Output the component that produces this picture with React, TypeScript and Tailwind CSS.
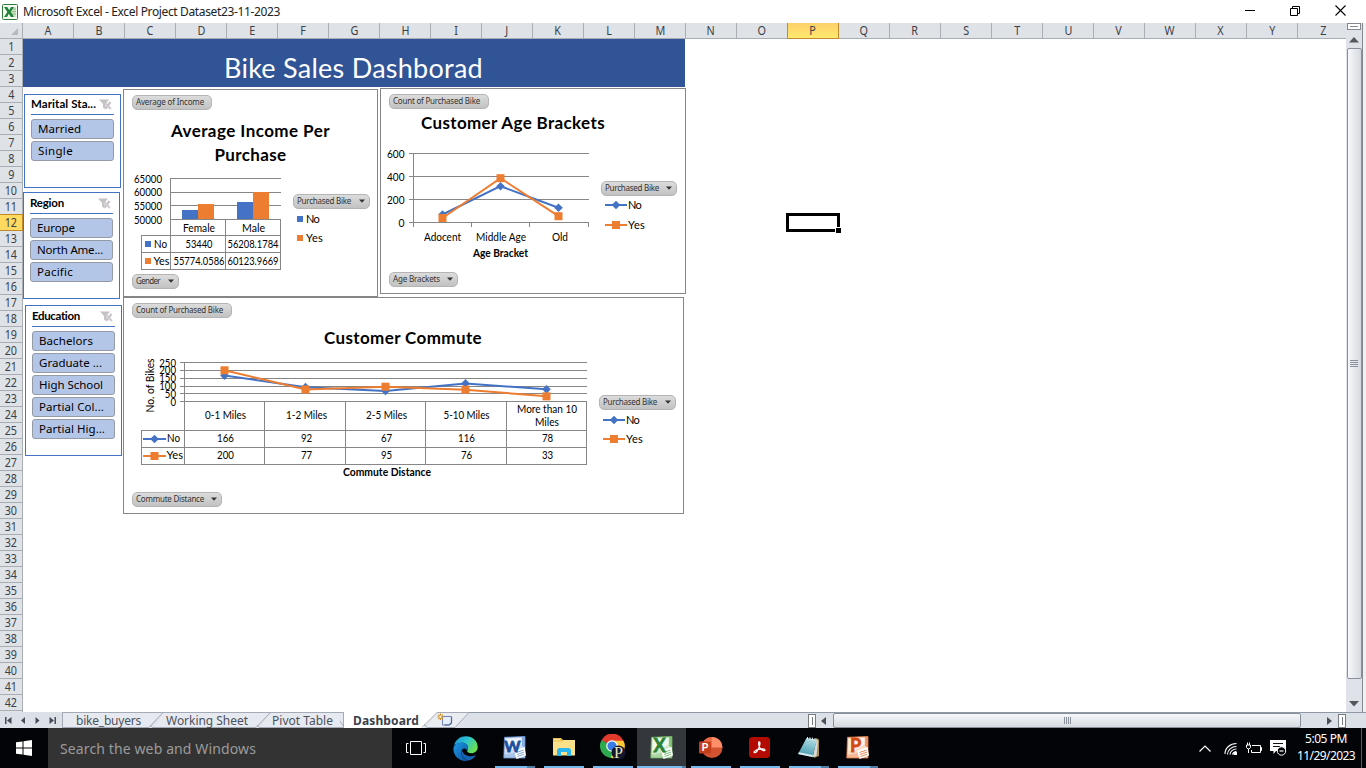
import { useLayoutEffect, useRef, useState } from "react";
import type { ReactNode } from "react";

const CALIBRI = "font-['Lato','Liberation_Sans',sans-serif]";
const SEGOE = "font-['Noto_Sans','Open_Sans',sans-serif]";
const BLUE = "#4472c4";
const ORANGE = "#ed7d31";

/** Single-line text whose tracking is adjusted so it spans `w` pixels. */
function Fit({ w, className = "", children }: { w: number; className?: string; children: string }) {
  const ref = useRef<HTMLSpanElement>(null);
  const [spacing, setSpacing] = useState(0);
  useLayoutEffect(() => {
    if (ref.current) {
      const natural = ref.current.getBoundingClientRect().width;
      setSpacing((w - natural) / children.length);
    }
  }, [w, children]);
  return (
    <span ref={ref} className={"inline-block shrink-0 whitespace-pre " + className} style={{ letterSpacing: spacing }}>
      {children}
    </span>
  );
}

type LabelProps = { x: number; y: number; w?: number; size?: number; bold?: boolean; anchor?: "start" | "middle" | "end"; children: string };
function Label({ x, y, w, size = 11, bold, anchor = "middle", children }: LabelProps) {
  return (
    <text x={x} y={y} fontSize={size} fontWeight={bold ? 700 : 400} textAnchor={anchor} fill="#000" textLength={w} lengthAdjust="spacingAndGlyphs">
      {children}
    </text>
  );
}

function FieldButton({ label, w, textW, arrow, className = "" }: { label: string; w: number; textW: number; arrow?: boolean; className?: string }) {
  return (
    <button
      className={"flex h-[15px] shrink-0 items-center justify-between rounded-[5px] border border-[#b4b4b4] bg-linear-to-b from-[#dcdcdc] to-[#c2c2c2] pr-1 pb-px pl-[3px] text-[8px] leading-none text-[#333] " + SEGOE + " " + className}
      style={{ width: w }}
    >
      <Fit w={textW}>{label}</Fit>
      {arrow && (
        <svg width="6" height="4" viewBox="0 0 6 4"><path d="M0 .5h6L3 3.7z" fill="#333" /></svg>
      )}
    </button>
  );
}

function FilterIcon() {
  return (
    <svg width="13" height="11" viewBox="0 0 13 11">
      <path d="M0 .5h10L6.500 5V10.500L4 8.500V5z" fill="#c4c2c4" />
      <path d="M5.800 4l6 6M11.500 3l-5 6.500" stroke="#c6c2c8" strokeWidth="2.200" />
      <path d="M6 4.500l5.500 5.500" stroke="#efeaf0" strokeWidth=".7" />
    </svg>
  );
}

function Slicer({ title, titleW, items, className }: { title: string; titleW: number; items: [string, number][]; className: string }) {
  return (
    <section className={"flex w-[97px] shrink-0 flex-col border border-[#4472c4] bg-white px-1.5 " + className}>
      <header className="flex h-[20px] shrink-0 items-center justify-between border-b border-[#4472c4] pr-[2px] pb-px">
        <Fit w={titleW} className={"text-[11.5px] leading-none font-bold text-black " + CALIBRI}>{title}</Fit>
        <FilterIcon />
      </header>
      <div className="mt-1 flex flex-col gap-0.5">
        {items.map(([item, w]) => (
          <button key={item} className={"flex h-5 items-center rounded-[3px] border border-[#949aa6] bg-[#b4c6e7] pl-1.5 text-[11.5px] leading-none text-black " + SEGOE}>
            <Fit w={w}>{item}</Fit>
          </button>
        ))}
      </div>
    </section>
  );
}

function Diamond({ x, y }: { x: number; y: number }) {
  return <path d={`M${x} ${y - 4.3}l4.3 4.3l-4.3 4.3l-4.3 -4.3z`} fill={BLUE} />;
}
function Square({ x, y }: { x: number; y: number }) {
  return <rect x={x - 4} y={y - 4} width="8" height="8" fill={ORANGE} />;
}
function Series({ no, yes }: { no: number[][]; yes: number[][] }) {
  return (
    <g fill="none" strokeWidth="2">
      <polyline points={no.join(" ")} stroke={BLUE} />
      {no.map(([x, y]) => <Diamond key={x} x={x} y={y} />)}
      <polyline points={yes.join(" ")} stroke={ORANGE} />
      {yes.map(([x, y]) => <Square key={x} x={x} y={y} />)}
    </g>
  );
}

function LineLegend({ gap }: { gap: string }) {
  return (
    <ul className={"ml-1 flex flex-col text-[11px] leading-[13px] text-black " + gap + " " + CALIBRI}>
      <li className="flex items-center gap-px">
        <svg width="22" height="10" viewBox="0 0 22 10"><path d="M0 5h22" stroke={BLUE} strokeWidth="2" /><Diamond x={11} y={5} /></svg>
        <Fit w={13}>No</Fit>
      </li>
      <li className="flex items-center gap-px">
        <svg width="22" height="10" viewBox="0 0 22 10"><path d="M0 5h22" stroke={ORANGE} strokeWidth="2" /><Square x={11} y={5} /></svg>
        <Fit w={17}>Yes</Fit>
      </li>
    </ul>
  );
}

function IncomeChart() {
  return (
    <section className="mt-0.5 flex h-[208px] w-[255px] shrink-0 flex-col border border-[#868686] bg-white">
      <FieldButton label="Average of Income" w={80} textW={68} className="mt-[5px] ml-2" />
      <h2 className={"mt-[9px] flex flex-col items-center text-[17px] leading-6 font-bold text-black " + CALIBRI}>
        <Fit w={159}>Average Income Per</Fit>
        <Fit w={72}>Purchase</Fit>
      </h2>
      <div className="mt-[5px] ml-2 flex">
        <svg width="151" height="99" viewBox="132 172 151 99" className={CALIBRI}>
          <g stroke="#868686" shapeRendering="crispEdges">
            <path d="M170 178.5H281M170 192.5H281M170 205.5H281M141 235.5H281M141 252.5H281M141 269.5H281" fill="none" />
          </g>
          <rect x="182" y="210" width="16" height="9.5" fill={BLUE} />
          <rect x="198" y="204" width="16" height="15.5" fill={ORANGE} />
          <rect x="237" y="202" width="16" height="17.5" fill={BLUE} />
          <rect x="253" y="192" width="16" height="27.5" fill={ORANGE} />
          <path d="M170 219.5H281M141.5 235V270M170.5 178V270M225.5 219V270M280.5 219V270" stroke="#868686" fill="none" shapeRendering="crispEdges" />
          <Label x={162} y={182.5} w={28} anchor="end">65000</Label>
          <Label x={162} y={195.5} w={28} anchor="end">60000</Label>
          <Label x={162} y={209.5} w={28} anchor="end">55000</Label>
          <Label x={162} y={223.5} w={28} anchor="end">50000</Label>
          <Label x={199} y={231.5} w={32}>Female</Label>
          <Label x={253.5} y={231.5} w={23}>Male</Label>
          <rect x="145" y="241" width="6" height="6" fill={BLUE} />
          <rect x="145" y="258" width="6" height="6" fill={ORANGE} />
          <Label x={154} y={247.5} w={13} anchor="start">No</Label>
          <Label x={153.5} y={264.5} w={16} anchor="start">Yes</Label>
          <Label x={199} y={247.5} w={27}>53440</Label>
          <Label x={253} y={247.5} w={51}>56208.1784</Label>
          <Label x={199} y={264.5} w={51}>55774.0586</Label>
          <Label x={253} y={264.5} w={51}>60123.9669</Label>
        </svg>
        <div className="mt-[22px] ml-2.5">
          <FieldButton label="Purchased Bike" w={77} textW={54} arrow />
          <ul className={"mt-[3px] ml-1 flex flex-col gap-1.5 text-[11px] leading-[13px] text-black " + CALIBRI}>
            <li className="flex items-center gap-[3px]"><i className="size-1.5 bg-[#4472c4]" /><Fit w={13}>No</Fit></li>
            <li className="flex items-center gap-[3px]"><i className="size-1.5 bg-[#ed7d31]" /><Fit w={17}>Yes</Fit></li>
          </ul>
        </div>
      </div>
      <FieldButton label="Gender" w={47} textW={24} arrow className="mt-[3px] ml-2" />
    </section>
  );
}

function AgeChart() {
  return (
    <section className="mt-px ml-0.5 flex h-[206px] w-[306px] shrink-0 flex-col border border-[#868686] bg-white">
      <FieldButton label="Count of Purchased Bike" w={100} textW={87} className="mt-[5px] ml-2" />
      <h2 className={"mt-[3px] ml-10 h-[22px] text-[17px] leading-[22px] font-bold text-black " + CALIBRI}>
        <Fit w={184}>Customer Age Brackets</Fit>
      </h2>
      <div className="mt-[11px] ml-0.5 flex">
        <svg width="208" height="117" viewBox="383 145 208 117" className={CALIBRI}>
          <path
            d="M409 153.5H589M409 176.5H589M409 199.5H589M409 222.5H589M413.5 153V227M471.5 222V227M529.5 222V227M588.5 222V227"
            stroke="#868686" fill="none" shapeRendering="crispEdges"
          />
          <Series no={[[442.5, 214.5], [500.5, 186.2], [558.5, 207.7]]} yes={[[442.5, 218], [500.5, 178.2], [558.5, 216.2]]} />
          <Label x={404.5} y={157.5} w={17.5} anchor="end">600</Label>
          <Label x={404.5} y={180.5} w={17.5} anchor="end">400</Label>
          <Label x={404.5} y={203.5} w={17.5} anchor="end">200</Label>
          <Label x={404.5} y={226.5} w={6} anchor="end">0</Label>
          <Label x={442.5} y={240.5} w={37}>Adocent</Label>
          <Label x={501} y={240.5} w={50}>Middle Age</Label>
          <Label x={560} y={240.5} w={16}>Old</Label>
          <Label x={500.5} y={256.5} w={55} size={10.5} bold>Age Bracket</Label>
        </svg>
        <div className="mt-9 ml-2.5">
          <FieldButton label="Purchased Bike" w={76} textW={54} arrow className="mb-[2px]" />
          <LineLegend gap="gap-[7px]" />
        </div>
      </div>
      <FieldButton label="Age Brackets" w={69} textW={47} arrow className="mt-2.5 ml-2" />
    </section>
  );
}

const COMMUTE = [
  { x: 224.5, name: "0-1 Miles", w: 41, no: 166, yes: 200 },
  { x: 305.5, name: "1-2 Miles", w: 41, no: 92, yes: 77 },
  { x: 385.5, name: "2-5 Miles", w: 41, no: 67, yes: 95 },
  { x: 465.5, name: "5-10 Miles", w: 46, no: 116, yes: 76 },
  { x: 546.5, name: "", w: 0, no: 78, yes: 33 },
];
const scaleY = (v: number) => 401.5 - (v / 250) * 39;
const numW = (v: number) => String(v).length * 5.6;

function CommuteChart() {
  return (
    <section className="flex h-[217px] w-[561px] shrink-0 flex-col border border-[#868686] bg-white">
      <FieldButton label="Count of Purchased Bike" w={100} textW={87} className="mt-[5px] ml-2" />
      <h2 className={"mt-[9px] ml-[200px] h-[22px] text-[17px] leading-[22px] font-bold text-black " + CALIBRI}>
        <Fit w={158}>Customer Commute</Fit>
      </h2>
      <div className="mt-1.5 ml-4 flex">
        <svg width="450" height="127" viewBox="140 355 450 127" className={CALIBRI}>
          <path
            d="M180 362.5H587M180 370.5H587M180 378.5H587M180 386.5H587M180 393.5H587M180 401.5H587M141 430.5H587M141 447.5H587M141 464.5H587M141.5 430V465M184.5 362V465M264.5 401V465M345.5 401V465M425.5 401V465M506.5 401V465M586.5 401V465"
            stroke="#868686" fill="none" shapeRendering="crispEdges"
          />
          <Series no={COMMUTE.map((c) => [c.x, scaleY(c.no)])} yes={COMMUTE.map((c) => [c.x, scaleY(c.yes)])} />
          {[250, 200, 150, 100, 50, 0].map((v) => (
            <Label key={v} x={176} y={scaleY(v) + 4} w={numW(v)} anchor="end">{String(v)}</Label>
          ))}
          <g transform="translate(153.5 385.5) rotate(-90)"><Label x={0} y={0} w={54}>No. of Bikes</Label></g>
          {COMMUTE.filter((c) => c.name).map((c) => (
            <Label key={c.x} x={c.x + 1} y={419} w={c.w}>{c.name}</Label>
          ))}
          <Label x={547} y={413} w={60}>More than 10</Label>
          <Label x={547} y={426} w={24}>Miles</Label>
          {COMMUTE.map((c) => (
            <g key={c.x}>
              <Label x={c.x + 1} y={442} w={numW(c.no)}>{String(c.no)}</Label>
              <Label x={c.x + 1} y={459} w={numW(c.yes)}>{String(c.yes)}</Label>
            </g>
          ))}
          <path d="M143 439H166" stroke={BLUE} strokeWidth="2" />
          <Diamond x={154.5} y={439} />
          <path d="M143 456H166" stroke={ORANGE} strokeWidth="2" />
          <Square x={154.5} y={456} />
          <Label x={167} y={442} w={13} anchor="start">No</Label>
          <Label x={166.5} y={459} w={16.5} anchor="start">Yes</Label>
          <Label x={387} y={476} w={88} size={10.5} bold>Commute Distance</Label>
        </svg>
        <div className="mt-10 ml-[9px]">
          <FieldButton label="Purchased Bike" w={77} textW={54} arrow className="mb-[3px]" />
          <LineLegend gap="gap-1.5" />
        </div>
      </div>
      <FieldButton label="Commute Distance" w={90} textW={68} arrow className="mt-2.5 ml-2" />
    </section>
  );
}

function TitleBar() {
  return (
    <header className="flex h-[23px] shrink-0 items-center bg-white">
      <svg width="16" height="16" viewBox="0 0 16 16" className="ml-0.5">
        <rect x=".5" y=".5" width="15" height="15" rx="1" fill="#f4faf2" stroke="#2f7d3b" />
        <path d="M9 3h5v10H9z" fill="#cfe6c9" /><path d="M10 5h4M10 7.5h4M10 10h4" stroke="#78b56f" strokeWidth=".8" />
        <path d="M2 3h3.2l2 3 1.8-3h3L8.8 7.8 12 13H8.8L6.8 9.8 5 13H2l3.3-5z" fill="#23833a" />
      </svg>
      <Fit w={257} className={"ml-[5px] text-[12px] leading-none text-[#222] " + SEGOE}>Microsoft Excel - Excel Project Dataset23-11-2023</Fit>
      <div className="mr-5 mb-[2px] ml-auto flex items-center gap-[35px]">
        <svg width="10" height="11" viewBox="0 0 10 11"><path d="M0 5.500h10" stroke="#000" /></svg>
        <svg width="10" height="11" viewBox="0 0 10 11" fill="none" stroke="#000"><path d="M.5 3.500h7v7h-7zM2.500 3V1.500h7v7H8" /></svg>
        <svg width="11" height="11" viewBox="0 0 11 11"><path d="M.5.5l10 10M10.500.5l-10 10" stroke="#000" strokeWidth="1.1" /></svg>
      </div>
    </header>
  );
}

function ColumnHeaders() {
  return (
    <div className={"flex h-4 shrink-0 overflow-hidden text-[12px] leading-none text-[#3b3f46] " + SEGOE}>
      <div className="flex w-[23px] shrink-0 items-end justify-end border-r border-b border-[#a9aeb4] bg-[#dfe3e8] pr-1 pb-[3px]">
        <svg width="7" height="7" viewBox="0 0 7 7"><path d="M7 0v7H0z" fill="#b6babf" /></svg>
      </div>
      {"ABCDEFGHIJKLMNOPQRSTUVWXYZ".split("").map((c) => (
        <div
          key={c}
          className={
            c === "P"
              ? "-ml-px flex w-[52px] shrink-0 items-center justify-center border-x border-b border-[#c08b2d] bg-linear-to-b from-[#fdd06a] to-[#ffe96e]"
              : "flex w-[51px] shrink-0 items-center justify-center border-r border-b border-[#a9aeb4] bg-[#dfe3e8]"
          }
        >
          <span className="scale-x-90">{c}</span>
        </div>
      ))}
    </div>
  );
}

function RowHeaders() {
  return (
    <div className={"flex w-[23px] shrink-0 flex-col overflow-hidden text-[12px] leading-none text-[#3b3f46] " + SEGOE}>
      {Array.from({ length: 43 }, (_, i) => i + 1).map((n) => (
        <div
          key={n}
          className={
            n === 12
              ? "-mt-px flex h-[17px] shrink-0 items-center justify-center border-y border-r border-[#c08b2d] bg-[#ffd960]"
              : "flex h-4 shrink-0 items-center justify-center border-r border-b border-[#a9aeb4] bg-[#dfe3e8]"
          }
        >
          <span className="scale-x-90">{n < 43 ? n : ""}</span>
        </div>
      ))}
    </div>
  );
}

function VerticalScroll() {
  return (
    <div className="flex w-5 shrink-0 flex-col bg-[#f0f0f0]">
      <div className="flex w-[17px] grow flex-col items-center border-r border-[#85898f] bg-[#dfe3e9]">
        <div className="flex h-[7px] w-[14px] shrink-0 items-center justify-center border border-[#85898f] bg-white"><i className="h-px w-2 bg-[#85898f]" /></div>
        <svg width="10" height="6" viewBox="0 0 10 6" className="mt-[7px] shrink-0"><path d="M5 0l5 5.500H0z" fill="#54575c" /></svg>
        <div className="mt-[5px] flex h-[631px] w-[15px] shrink-0 flex-col items-center justify-center gap-px rounded-[2px] border border-[#8a9099] bg-linear-to-r from-[#f7f8fa] to-[#d6dae0]">
          {[0, 1, 2, 3].map((i) => <i key={i} className="h-px w-2 bg-[#8a9099]" />)}
        </div>
        <svg width="10" height="6" viewBox="0 0 10 6" className="mt-[22px] shrink-0"><path d="M0 0h10L5 5.500z" fill="#54575c" /></svg>
      </div>
    </div>
  );
}

function SheetTabs() {
  return (
    <div className="flex h-4 shrink-0 bg-[#dce1e8]">
      <div className="flex w-[62px] shrink-0 items-center gap-[9px] pl-[5px] text-[#454b57]">
        {["M0 0h1.500v7H0zM6.500 0v7L2 3.500z", "M5 0v7L1 3.500z", "M1.500 0v7L5.500 3.500z", "M5.500 0H7v7H5.500zM.5 0v7L5 3.500z"].map((d) => (
          <svg key={d} width="7" height="7" viewBox="0 0 7 7" fill="currentColor" className="mr-[-1.5px]"><path d={d} /></svg>
        ))}
      </div>
      <div className={"relative flex w-[746px] shrink-0 items-center border-t border-[#8f98a5] text-[12px] leading-none text-[#4c515b] " + SEGOE}>
        <svg width="746" height="16" viewBox="62 712 746 16" className="absolute -top-px left-0">
          <path d="M62.500 727.500V712.500H163L149 727.500z" fill="#e6eaf0" />
          <path d="M152 727.500L164 712.500H270.500L256 727.500z" fill="#e6eaf0" />
          <path d="M259 727.500L271 712.500H344V727.500z" fill="#e6eaf0" />
          <path d="M344 712H437.500L423 728H344z" fill="#fff" />
          <path d="M425 727.500L438 712.500H469L455 727.500z" fill="#e9edf2" />
          <path d="M62.500 728V712.500H343.500V728M62 727.500H149L163 712.500M152 727.500L150 725M152 727.500H256L270.500 712.500M259 727.500L257 725M259 727.500H344M340 721L344 727M422 727.500L437 712.500H469L455 727.500H427L424 724" fill="none" stroke="#a4abb6" />
          <path d="M442.500 716.500h9v6l-3 2.500h-6z" fill="#e6eefb" stroke="#6f84ae" />
          <path d="M451.500 717v6l-2 2h-5" fill="none" stroke="#4d6496" strokeWidth="1.200" />
          <path d="M440.500 713.500v6.500M437.300 716.800h6.500M438.300 714.600l4.500 4.500M442.800 714.600l-4.500 4.500" stroke="#d08b1c" strokeWidth="1.100" />
          <circle cx="440.500" cy="716.800" r="1.200" fill="#fff3c8" />
        </svg>
        <Fit w={65} className="relative ml-[14px]">bike_buyers</Fit>
        <Fit w={82} className="relative ml-[25px]">Working Sheet</Fit>
        <Fit w={61} className="relative ml-6">Pivot Table</Fit>
        <Fit w={66} className="relative ml-5 font-bold text-[#3a3f49]">Dashboard</Fit>
      </div>
      <div className="flex grow items-center border-t border-[#8f98a5]">
        <div className="flex h-[14px] w-2 shrink-0 items-center justify-center border border-[#777b82] bg-white"><i className="h-2 w-px bg-[#777b82]" /></div>
        <svg width="5" height="8" viewBox="0 0 5 8" className="ml-[5px] shrink-0"><path d="M5 0v8L0 4z" fill="#4b4e54" /></svg>
        <div className="ml-[7px] flex h-[15px] w-[468px] shrink-0 items-center justify-center gap-px rounded-[2px] border border-[#8a9099] bg-linear-to-b from-[#f5f7f9] to-[#d6dae0]">
          {[0, 1, 2, 3].map((i) => <i key={i} className="h-[7px] w-px bg-[#8a9099]" />)}
        </div>
        <svg width="5" height="8" viewBox="0 0 5 8" className="ml-[26px] shrink-0"><path d="M0 0v8l5-4z" fill="#4b4e54" /></svg>
        <div className="ml-[6px] flex h-[14px] w-2 shrink-0 items-center justify-center border border-[#777b82] bg-white"><i className="h-2 w-px bg-[#777b82]" /></div>
        <div className="h-4 w-[22px] shrink-0 border-r border-[#85898f]" />
        <div className="h-4 grow bg-[#f0f0f0]" />
      </div>
    </div>
  );
}

function EdgeIcon() {
  return (
    <svg width="25" height="25" viewBox="0 0 24 24">
      <defs>
        <linearGradient id="edgeTop" x1="0" y1="0" x2="1" y2=".6"><stop offset="0" stopColor="#1b8fd8" /><stop offset=".5" stopColor="#2dc3cf" /><stop offset="1" stopColor="#6be04c" /></linearGradient>
        <linearGradient id="edgeLow" x1="0" y1="0" x2="1" y2="1"><stop offset="0" stopColor="#1d9be6" /><stop offset="1" stopColor="#0b4fa0" /></linearGradient>
      </defs>
      <path d="M1 9C2.500 3.500 7 .3 12.200.3 19 .3 23.700 5 23.700 10.500c0 4-3 6-6 6-2.700 0-4.200-1-4.200-2 0-.8 1-1.200 1-3C14.500 8.500 11.500 6.500 8.500 6.500 5 6.500 2 8 1 9z" fill="url(#edgeTop)" />
      <path d="M.4 12.500C.4 8.500 4 6.200 8.200 6.200c3.500 0 6.300 2.300 6.300 5 0 1-.5 2-1 2.600C11 10.500 8 12.500 8 16c0 4 3.500 7.300 7 7.500-1 .3-2 .4-3 .4C5.500 23.900.4 18.800.4 12.500z" fill="url(#edgeLow)" />
      <path d="M8.500 13.500C7 18 10 23 15.500 23.400c3-.8 5.300-2.500 6.700-5.100-6 2.800-12.200.7-13.700-4.800z" fill="#1464b4" />
    </svg>
  );
}
function OfficeTile({ letter, size, dark, light, tint }: { letter: string; size: number; dark: string; light: string; tint: string }) {
  return (
    <svg width="23" height="23" viewBox="0 0 23 23">
      <path d="M1.500 1.300L22 .5v21.500H.8z" fill={tint} stroke={light} strokeWidth=".8" />
      <path d="M19 .8l3-.3V12l-3-2z" fill={light} opacity=".7" />
      <path d="M3 3L18.500 2v6C14 12 8 14.500 2.500 15z" fill="#fff" opacity=".7" />
      <path d="M1 18.500c6 0 12-2 15-5l6 1v7.500H.8z" fill={light} opacity=".35" />
      <path d="M11 14.500L21.500 11l1.500 8.500L13.500 23z" fill="#fff" />
      <path d="M13.500 16.500l7-2.400M14 18.500l7-2.400M14.500 20.500l6.500-2.300" stroke={light} strokeWidth=".9" />
      <text x="9.500" y="16.200" fontSize={size} fontWeight="700" textAnchor="middle" fill={dark} stroke={dark} strokeWidth=".8" fontFamily="Lato, Liberation Sans, sans-serif">{letter}</text>
    </svg>
  );
}
function ExplorerIcon() {
  return (
    <svg width="22" height="20" viewBox="0 0 22 20">
      <path d="M0 1h8l2 2h12v5H0z" fill="#e8c04c" /><path d="M0 4.500h9l2-1.500h11v15.500H0z" fill="#fbe08a" /><path d="M1 2.300h6v1H1z" fill="#fff3c4" />
      <path d="M4 19v-6.500L6 11h10l2 1.500V19h-4v-4H8v4z" fill="#2ab7ef" />
    </svg>
  );
}
function ChromeIcon() {
  return (
    <svg width="26" height="26" viewBox="0 0 26 26">
      <path d="M12.500 12L1.600 6.500A12 12 0 0 1 23.500 7z" fill="#e23b2e" /><path d="M12 12L1.600 6A12 12 0 0 0 11 24z" fill="#2da94f" /><path d="M12 12L11 24A12 12 0 0 0 23.500 6.800H12z" fill="#fcc934" />
      <circle cx="12" cy="12" r="5.800" fill="#fff" /><circle cx="12" cy="12" r="4.600" fill="#3a7de8" />
      <circle cx="18.500" cy="18.500" r="7" fill="#12172e" />
      <text x="18.500" y="24" fontSize="16" textAnchor="middle" fill="#f3e2bb" fontFamily="Liberation Serif, serif">P</text>
    </svg>
  );
}
function PowerPointIcon() {
  return (
    <svg width="25" height="23" viewBox="0 0 25 23">
      <circle cx="14" cy="11.500" r="10.500" fill="#d35230" /><path d="M14 1a10.500 10.500 0 0 1 10.500 10.500H14z" fill="#ff8f6b" /><path d="M14 1v10.500H3.500A10.500 10.500 0 0 1 14 1z" fill="#ed6c47" />
      <rect x="1" y="5.500" width="12" height="12" rx="1" fill="#c43e1c" />
      <text x="7" y="15" fontSize="10" fontWeight="700" textAnchor="middle" fill="#fff" fontFamily="Liberation Sans, sans-serif">P</text>
    </svg>
  );
}
function AcrobatIcon() {
  return (
    <svg width="21" height="21" viewBox="0 0 21 21">
      <rect width="21" height="21" rx="3.500" fill="#b30b00" />
      <path d="M10.200 4.800c1.200 0 .8 3-.2 5.700-1.200 3-3.200 5.600-4.600 5.200-1.200-.6 1-2.600 4-3.300 3-.8 6.700-.6 6.600.7-.2 1.300-3.500.2-5-2-1.300-1.900-2-6.300-.8-6.300z" fill="none" stroke="#fff" strokeWidth="1.200" />
    </svg>
  );
}
function NotepadIcon() {
  return (
    <svg width="24" height="23" viewBox="0 0 24 23">
      <defs><linearGradient id="pad" x1=".6" y1="0" x2=".3" y2="1"><stop offset="0" stopColor="#b5dde5" /><stop offset=".5" stopColor="#74b9c9" /><stop offset="1" stopColor="#4a96ab" /></linearGradient></defs>
      <path d="M19 2l3 1.500V20l-5 2z" fill="#a98c52" />
      <path d="M9.500 2L20 3.500 15.500 21 1 18z" fill="url(#pad)" />
      <path d="M20 3.500L21 5l-1.500 15-4 1.500z" fill="#d9dcd8" /><path d="M1 18l14.500 3 .5-1.700L2 16.300z" fill="#dceff3" />
      <path d="M10.500 1v2.500M13 1.300v2.500M15.500 1.700v2.500M18 2v2.500" stroke="#e7ebec" />
    </svg>
  );
}

function TaskButton({ children, active, split }: { children: ReactNode; active?: boolean; split?: boolean }) {
  return (
    <div className={"flex h-10 w-[49px] shrink-0 flex-col items-center " + (active ? "bg-[#34383d]" : "")}>
      <div className="flex h-[38px] items-center justify-center">{children}</div>
      <div className={"flex h-0.5 " + (active ? "w-[49px]" : "w-10")}>
        <i className="h-0.5 grow bg-[#76b9ed]" />
        {split && <i className={"h-0.5 bg-[#4f7fa6] " + (active ? "w-1" : "w-2")} />}
      </div>
    </div>
  );
}

function Taskbar() {
  return (
    <footer className="flex h-10 shrink-0 bg-[#020408] text-white">
      <div className="flex w-12 shrink-0 items-center justify-center">
        <svg width="16" height="16" viewBox="0 0 16 16" fill="#fff"><path d="M0 2.300L6.500 1.400V7.500H0zM7.500 1.200L16 0v7.500H7.500zM0 8.500h6.500v6.100L0 13.700zM7.500 8.500H16V16l-8.500-1.200z" /></svg>
      </div>
      <div className={"flex w-[344px] shrink-0 items-center bg-[#333] pt-px pl-3 text-[14px] leading-none text-[#9b9b9b] " + SEGOE}>
        <Fit w={196}>Search the web and Windows</Fit>
      </div>
      <div className="flex w-[99px] shrink-0 items-center pl-[14px]">
        <svg width="20" height="14" viewBox="0 0 20 14" fill="none" stroke="#fff"><path d="M4.500.5h11v13h-11zM2.500 2.500H.5v9h2M17.500 2.500h2v9h-2" /></svg>
        <div className="ml-[27px]"><EdgeIcon /></div>
      </div>
      <div className="-ml-px flex">
        <TaskButton split><OfficeTile letter="W" size={15.5} dark="#1d4f9e" light="#6d9bd8" tint="#c9dbf3" /></TaskButton>
        <TaskButton><ExplorerIcon /></TaskButton>
        <TaskButton><ChromeIcon /></TaskButton>
        <TaskButton active split><OfficeTile letter="X" size={18} dark="#2a8236" light="#69b35d" tint="#cfe9c6" /></TaskButton>
        <TaskButton><PowerPointIcon /></TaskButton>
        <TaskButton><AcrobatIcon /></TaskButton>
        <TaskButton split><NotepadIcon /></TaskButton>
        <TaskButton split><OfficeTile letter="P" size={18} dark="#d24a16" light="#e87b43" tint="#fbd9c3" /></TaskButton>
      </div>
      <div className="mr-1 ml-auto flex items-center">
        <svg width="12" height="7" viewBox="0 0 12 7" fill="none" stroke="#fff" strokeWidth="1.200"><path d="M.5 6.500L6 1l5.500 5.500" /></svg>
        <svg width="13" height="13" viewBox="0 0 13 13" fill="none" stroke="#fff" strokeWidth="1.100" className="ml-[13px]">
          <path d="M1 12C1 6 6 1.500 12.500 1.500M3.500 12.500c0-4.500 4-8 9-8M6 12.500c0-3 3-5.500 6.500-5.500M8.500 12.500c0-1.500 2-3 4-3" /><rect x="10" y="10.500" width="2.500" height="2" fill="#fff" />
        </svg>
        <svg width="17" height="13" viewBox="0 0 17 13" fill="none" stroke="#fff" className="ml-[9px]">
          <path d="M6 3.500h8.500v7h-9V8M14.500 5.500h1v3h-1M.5 3v2.500L2 7h1l1.500-1.500V3zM1.500 3V.5M3.500 3V.5M2.500 7v4" />
        </svg>
        <svg width="17" height="16" viewBox="0 0 17 16" className="ml-[7px]">
          <path d="M0 0h16v11H6l-2.500 3v-3H0z" fill="#fff" /><path d="M3 3.500h10M3 6.500h7" stroke="#111" strokeWidth="1.200" />
          <circle cx="11.500" cy="11" r="4.200" fill="#020408" stroke="#fff" /><path d="M9.500 11h4" stroke="#fff" strokeWidth="1.200" />
        </svg>
        <div className={"mb-[2px] ml-[9px] flex w-[60px] flex-col items-center gap-[5px] text-[12px] leading-[12px] " + SEGOE}>
          <Fit w={42}>5:05 PM</Fit>
          <Fit w={58}>11/29/2023</Fit>
        </div>
        <div className="ml-[5px] h-10 w-px bg-[#5a5c60]" />
      </div>
    </footer>
  );
}

export default function App() {
  return (
    <div className="flex h-[768px] w-[1366px] flex-col overflow-hidden bg-white">
      <TitleBar />
      <div className="flex h-[689px] shrink-0">
        <div className="flex w-[1346px] shrink-0 flex-col overflow-hidden">
          <ColumnHeaders />
          <div className="flex min-h-0 grow">
            <RowHeaders />
            <main className="relative flex grow flex-col bg-white">
              <h1 className={"h-12 w-[662px] shrink-0 bg-[#305496] pt-[11px] pl-[201px] text-[27px] leading-9 text-white " + CALIBRI}>
                <Fit w={259}>Bike Sales Dashborad</Fit>
              </h1>
              <div className="flex">
                <aside className="flex w-[100px] shrink-0 flex-col">
                  <Slicer title="Marital Sta..." titleW={65} className="mt-[7px] ml-px h-[94px]" items={[["Married", 43], ["Single", 35]]} />
                  <Slicer title="Region" titleW={34} className="mt-1 h-[107px] pt-px" items={[["Europe", 38], ["North Ame...", 66], ["Pacific", 36]]} />
                  <Slicer title="Education" titleW={48} className="mt-1.5 ml-0.5 h-[151px] pt-px" items={[["Bachelors", 54], ["Graduate ...", 63], ["High School", 64], ["Partial Col...", 65], ["Partial Hig...", 66]]} />
                </aside>
                <div className="flex flex-col">
                  <div className="flex h-[210px]">
                    <IncomeChart />
                    <AgeChart />
                  </div>
                  <CommuteChart />
                </div>
              </div>
              <div className="absolute top-[174px] left-[763px] h-[19px] w-[54px] border-3 border-black">
                <i className="absolute -right-1 -bottom-1 size-[6px] border-t border-l border-white bg-black" />
              </div>
            </main>
          </div>
        </div>
        <VerticalScroll />
      </div>
      <SheetTabs />
      <Taskbar />
    </div>
  );
}
